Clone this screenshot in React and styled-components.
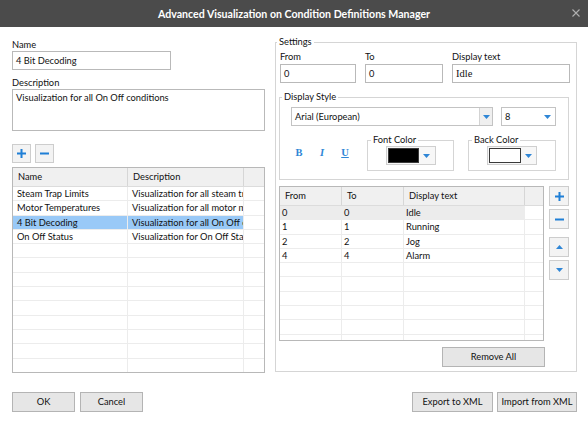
import React from "react";
import styled, { createGlobalStyle } from "styled-components";

const GlobalStyle = createGlobalStyle`
  html, body {
    margin: 0;
    padding: 0;
    background: #ffffff;
  }
  body {
    font-family: Lato, "Liberation Sans", Arial, sans-serif;
    font-size: 9.3px;
    color: #111;
  }
  * {
    box-sizing: border-box;
  }
`;

const Window = styled.div`
  width: 588px;
  height: 423px;
  display: flex;
  flex-direction: column;
  background: #fff;
  overflow: hidden;
`;

const TitleBar = styled.div`
  height: 27px;
  flex: none;
  background: #4b4b4b;
  color: #fff;
  font-weight: bold;
  font-size: 10.6px;
  display: flex;
  align-items: center;
  justify-content: center;
  position: relative;
`;

const Close = styled.svg`
  position: absolute;
  right: 8px;
  top: 9px;
`;

const Body = styled.div`
  display: flex;
  gap: 10px;
  padding: 9px 11px 0 12px;
`;

const LeftColumn = styled.div`
  width: 253px;
  display: flex;
  flex-direction: column;
`;

const Label = styled.div`
  line-height: 13px;
  margin-top: ${(p) => p.top || 0}px;
`;

const TextBox = styled.div`
  width: ${(p) => (p.width ? `${p.width}px` : "100%")};
  height: ${(p) => p.height || 19}px;
  margin-top: ${(p) => p.top || 0}px;
  border: 1px solid #b9b9b9;
  background: #fff;
  padding: ${(p) => (p.multi ? "1px 3px" : "0 3px")};
  line-height: ${(p) => (p.multi ? "13px" : "17px")};
  font-family: ${(p) => (p.serif ? '"Liberation Serif", serif' : "inherit")};
  font-size: ${(p) => (p.serif ? "10.5px" : "inherit")};
`;

const IconRow = styled.div`
  display: flex;
  gap: 4px;
  margin-top: 13px;
`;

const IconButton = styled.div`
  width: ${(p) => p.w || 19}px;
  height: ${(p) => p.h || 19}px;
  border: 1px solid #cdcdcd;
  background: #f3f3f3;
  display: flex;
  align-items: center;
  justify-content: center;
`;

const Grid = styled.div`
  width: ${(p) => p.width}px;
  height: ${(p) => p.height}px;
  margin-top: ${(p) => p.top || 0}px;
  border: 1px solid #b8b8b8;
  background: #fff;
  overflow: hidden;
  display: flex;
  flex-direction: column;
`;

const HeaderRow = styled.div`
  display: flex;
  height: 19px;
  flex: none;
  background: #f0f0f0;
  border-bottom: 1px solid #dcdcdc;
`;

const HeaderCell = styled.div`
  width: ${(p) => (p.width ? `${p.width}px` : "auto")};
  flex: ${(p) => (p.width ? "none" : "1")};
  border-right: 1px solid #d6d6d6;
  padding-left: 5px;
  line-height: 18px;
  white-space: nowrap;
  overflow: hidden;
  &:last-child {
    border-right: none;
  }
`;

const Row = styled.div`
  display: flex;
  height: 14.3px;
  flex: none;
  border-bottom: 1px solid #ececec;
`;

const Cell = styled.div`
  width: ${(p) => (p.width ? `${p.width}px` : "auto")};
  flex: ${(p) => (p.width ? "none" : "1")};
  border-right: 1px solid #ececec;
  padding-left: ${(p) => p.pad || 4}px;
  line-height: 13px;
  white-space: nowrap;
  overflow: hidden;
  background: ${(p) =>
    p.selected ? "#99c9f7" : p.current ? "#ececec" : "transparent"};
  &:last-child {
    border-right: none;
  }
`;

const Group = styled.fieldset`
  margin: ${(p) => p.margin || "0"};
  padding: ${(p) => p.pad || "0"};
  border: 1px solid #d5d5d5;
  width: ${(p) => p.width}px;
  min-inline-size: 0;
`;

const Legend = styled.legend`
  padding: 0 2px;
  margin-left: ${(p) => p.left || 0}px;
  line-height: 12px;
`;

const RightColumn = styled.div`
  width: 302px;
`;

const FieldGrid = styled.div`
  display: grid;
  grid-template-columns: 76px 78px 118px;
  column-gap: 9px;
  margin: 2px 0 0 1px;
`;

const Field = styled.div`
  display: flex;
  flex-direction: column;
  gap: 1px;
`;

const StyleRow = styled.div`
  display: flex;
  align-items: flex-start;
  gap: ${(p) => p.gap || 8}px;
  margin-top: ${(p) => p.top || 0}px;
  padding-left: 11px;
`;

const Combo = styled.div`
  width: ${(p) => p.width}px;
  height: 19px;
  border: 1px solid #c3c3c3;
  background: #fff;
  display: flex;
  align-items: stretch;
`;

const ComboText = styled.div`
  flex: 1;
  padding-left: 3px;
  line-height: 17px;
`;

const ComboArrow = styled.div`
  width: ${(p) => (p.split ? 13 : 16)}px;
  background: ${(p) => (p.split ? "#efefef" : "transparent")};
  border-left: ${(p) => (p.split ? "1px solid #d3d3d3" : "none")};
  display: flex;
  align-items: center;
  justify-content: center;
`;

const FormatButtons = styled.div`
  display: flex;
  gap: 7px;
  margin-top: 13px;
`;

const FormatButton = styled.span`
  width: 16px;
  text-align: center;
  color: #2f86d6;
  font-family: "Liberation Serif", serif;
  font-weight: bold;
  font-size: 10.5px;
  line-height: 12px;
  font-style: ${(p) => (p.italic ? "italic" : "normal")};
  text-decoration: ${(p) => (p.underline ? "underline" : "none")};
`;

const ColorButton = styled.div`
  width: 50px;
  height: 19px;
  margin: 0 auto;
  border: 1px solid #cfcfcf;
  background: #f7f7f7;
  display: flex;
  align-items: center;
  padding-left: 1px;
`;

const Swatch = styled.div`
  width: 33px;
  height: 15px;
  border: 1px solid #3a3a3a;
  background: ${(p) => p.color};
`;

const Arrow = ({ up }) => (
  <svg width="7" height="4" viewBox="0 0 7 4">
    <path d={up ? "M0 4 L3.5 0 L7 4 Z" : "M0 0 L7 0 L3.5 4 Z"} fill="#2f86d6" />
  </svg>
);

const TableArea = styled.div`
  display: flex;
  gap: 5px;
  margin-top: 6px;
`;

const SideButtons = styled.div`
  display: flex;
  flex-direction: column;
  gap: 3px;
  & > :nth-child(3) {
    margin-top: 5px;
  }
`;

const Button = styled.div`
  width: ${(p) => p.width}px;
  height: 20px;
  border: 1px solid #b4b4b4;
  background: #e6e6e6;
  text-align: center;
  line-height: 18px;
  white-space: nowrap;
  margin-top: ${(p) => p.top || 0}px;
  margin-left: ${(p) => p.left || 0}px;
`;

const Footer = styled.div`
  display: flex;
  justify-content: space-between;
  padding: 0 11px 0 12px;
  margin-top: 19px;
`;

const ButtonGroup = styled.div`
  display: flex;
  gap: ${(p) => p.gap || 5}px;
`;

const Plus = () => (
  <svg width="9" height="9" viewBox="0 0 9 9">
    <path d="M3.5 0 H5.5 V3.5 H9 V5.5 H5.5 V9 H3.5 V5.5 H0 V3.5 H3.5 Z" fill="#1f7fd6" />
  </svg>
);

const Minus = () => (
  <svg width="9" height="9" viewBox="0 0 9 9">
    <rect x="0" y="3.5" width="9" height="2" fill="#1f7fd6" />
  </svg>
);

const definitions = [
  ["Steam Trap Limits", "Visualization for all steam traps"],
  ["Motor Temperatures", "Visualization for all motor monitors"],
  ["4 Bit Decoding", "Visualization for all On Off conditions"],
  ["On Off Status", "Visualization for On Off Status"],
];

const ranges = [
  ["0", "0", "Idle"],
  ["1", "1", "Running"],
  ["2", "2", "Jog"],
  ["4", "4", "Alarm"],
];

export default function App() {
  const leftRows = Array.from({ length: 13 }, (_, i) => definitions[i] || ["", ""]);
  const rightRows = Array.from({ length: 10 }, (_, i) => ranges[i] || ["", "", ""]);

  return (
    <Window>
      <GlobalStyle />
      <TitleBar>
        Advanced Visualization on Condition Definitions Manager
        <Close width="8" height="8" viewBox="0 0 8 8">
          <path d="M0.5 0.5 L7.5 7.5 M7.5 0.5 L0.5 7.5" stroke="#b0b0b0" strokeWidth="1.1" />
        </Close>
      </TitleBar>
      <Body>
        <LeftColumn>
          <Label top={2}>Name</Label>
          <TextBox width={159}>4 Bit Decoding</TextBox>
          <Label top={6}>Description</Label>
          <TextBox height={42} multi>
            Visualization for all On Off conditions
          </TextBox>
          <IconRow>
            <IconButton>
              <Plus />
            </IconButton>
            <IconButton>
              <Minus />
            </IconButton>
          </IconRow>
          <Grid width={253} height={206} top={4}>
            <HeaderRow>
              <HeaderCell width={115}>Name</HeaderCell>
              <HeaderCell width={116}>Description</HeaderCell>
              <HeaderCell />
            </HeaderRow>
            {leftRows.map(([name, desc], i) => (
              <Row key={i}>
                <Cell width={115} selected={i === 2}>
                  {name}
                </Cell>
                <Cell width={116} selected={i === 2}>
                  {desc}
                </Cell>
                <Cell />
              </Row>
            ))}
          </Grid>
        </LeftColumn>

        <RightColumn>
          <Group width={302} pad="0 4px 4px 3px">
            <Legend left={-2}>Settings</Legend>
            <FieldGrid>
              <Field>
                <Label>From</Label>
                <TextBox>0</TextBox>
              </Field>
              <Field>
                <Label>To</Label>
                <TextBox>0</TextBox>
              </Field>
              <Field>
                <Label>Display text</Label>
                <TextBox serif>Idle</TextBox>
              </Field>
            </FieldGrid>

            <Group width={290} margin="8px 0 0 0" pad="0 0 8px 0">
              <Legend left={2}>Display Style</Legend>
              <StyleRow top={4}>
                <Combo width={202}>
                  <ComboText>Arial (European)</ComboText>
                  <ComboArrow split>
                    <Arrow />
                  </ComboArrow>
                </Combo>
                <Combo width={55}>
                  <ComboText>8</ComboText>
                  <ComboArrow>
                    <Arrow />
                  </ComboArrow>
                </Combo>
              </StyleRow>
              <StyleRow top={8} gap={14}>
                <FormatButtons>
                  <FormatButton>B</FormatButton>
                  <FormatButton italic>I</FormatButton>
                  <FormatButton underline>U</FormatButton>
                </FormatButtons>
                <Group width={87} pad="0 0 5px 0">
                  <Legend left={3}>Font Color</Legend>
                  <ColorButton>
                    <Swatch color="#000" />
                    <ComboArrow>
                      <Arrow />
                    </ComboArrow>
                  </ColorButton>
                </Group>
                <Group width={88} pad="0 0 5px 0">
                  <Legend left={3}>Back Color</Legend>
                  <ColorButton>
                    <Swatch color="#fff" />
                    <ComboArrow>
                      <Arrow />
                    </ComboArrow>
                  </ColorButton>
                </Group>
              </StyleRow>
            </Group>

            <TableArea>
              <Grid width={265} height={155}>
                <HeaderRow>
                  <HeaderCell width={62}>From</HeaderCell>
                  <HeaderCell width={62}>To</HeaderCell>
                  <HeaderCell width={121}>Display text</HeaderCell>
                  <HeaderCell />
                </HeaderRow>
                {rightRows.map(([from, to, text], i) => (
                  <Row key={i}>
                    <Cell width={62} pad={2} current={i === 0}>
                      {from}
                    </Cell>
                    <Cell width={62} pad={2} current={i === 0}>
                      {to}
                    </Cell>
                    <Cell width={121} pad={2} current={i === 0}>
                      {text}
                    </Cell>
                    <Cell />
                  </Row>
                ))}
              </Grid>
              <SideButtons>
                <IconButton w={20} h={20}>
                  <Plus />
                </IconButton>
                <IconButton w={20} h={20}>
                  <Minus />
                </IconButton>
                <IconButton w={20} h={20}>
                  <Arrow up />
                </IconButton>
                <IconButton w={20} h={20}>
                  <Arrow />
                </IconButton>
              </SideButtons>
            </TableArea>
            <Button width={103} top={6} left={163}>
              Remove All
            </Button>
          </Group>
        </RightColumn>
      </Body>
      <Footer>
        <ButtonGroup gap={5}>
          <Button width={63}>OK</Button>
          <Button width={63}>Cancel</Button>
        </ButtonGroup>
        <ButtonGroup gap={4}>
          <Button width={81}>Export to XML</Button>
          <Button width={80}>Import from XML</Button>
        </ButtonGroup>
      </Footer>
    </Window>
  );
}
